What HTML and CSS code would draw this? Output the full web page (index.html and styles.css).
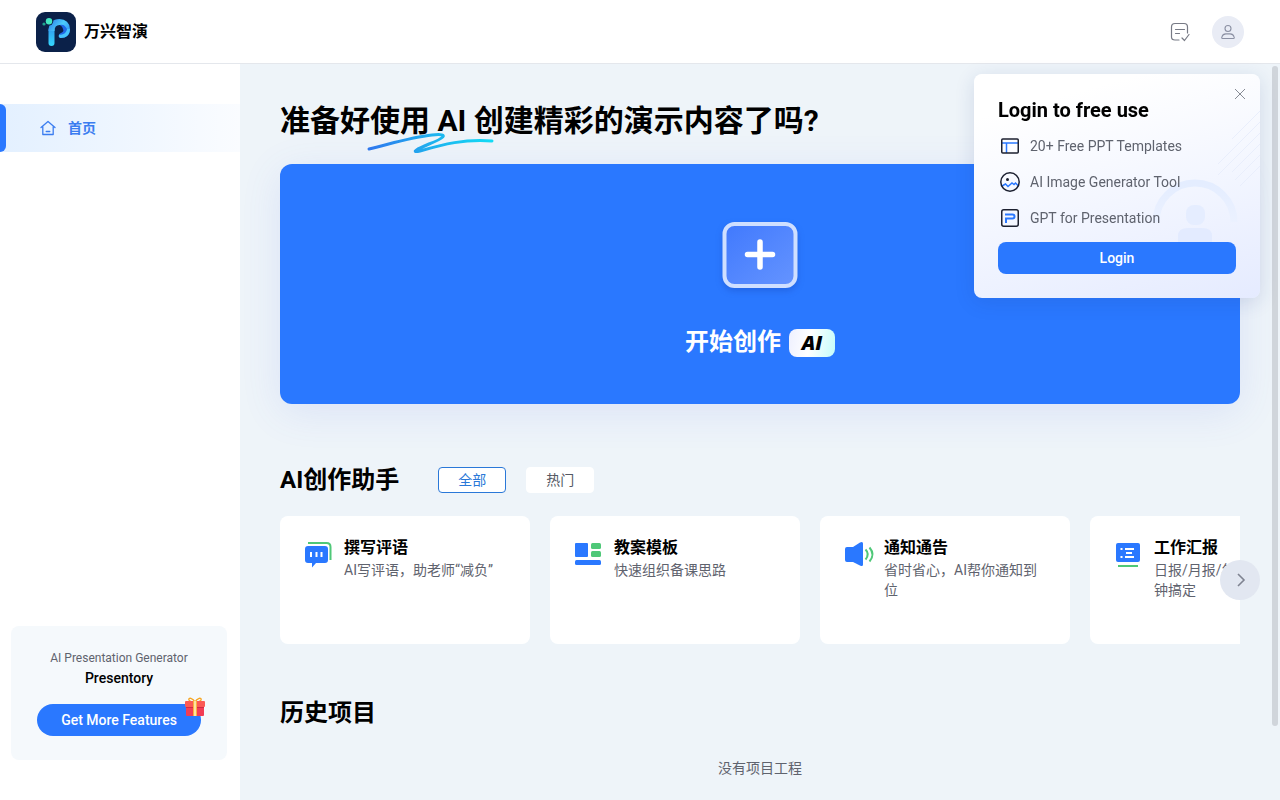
FILE: index.html
```html
<!DOCTYPE html>
<html lang="zh-CN">
<head>
    <meta charset="UTF-8">
    <meta name="viewport" content="width=device-width, initial-scale=1.0">
    <title>万兴智演</title>
    <link rel="stylesheet" href="styles.css">
</head>
<body>
<header class="header">
    <a class="brand" href="#">
        <svg class="logo" viewBox="0 0 40 40" fill="none">
            <defs>
                <linearGradient id="stem" x1="0" y1="10" x2="0" y2="34" gradientUnits="userSpaceOnUse">
                    <stop offset="0" stop-color="#2f86ea"/>
                    <stop offset="1" stop-color="#35d8fc"/>
                </linearGradient>
                <linearGradient id="bowl" x1="15" y1="8" x2="33" y2="22" gradientUnits="userSpaceOnUse">
                    <stop offset="0" stop-color="#2f86ea"/>
                    <stop offset=".5" stop-color="#4ccdfb"/>
                    <stop offset="1" stop-color="#2f8df2"/>
                </linearGradient>
            </defs>
            <rect width="40" height="40" rx="9" fill="#0b2149"/>
            <path d="M15.500 31V18" stroke="url(#stem)" stroke-width="6" stroke-linecap="round"/>
            <path d="M15.500 19c0-6 3-9 8-9 4.500 0 7.500 3 7.500 7" stroke="url(#bowl)" stroke-width="6"/>
            <path d="M24 13c4-1 5 1 7 4h3c0 6-4 9-9 9-3 0-3-4 0-5 2-1 3-2 2-4-.5-2-1.500-3-3-4z" fill="#1f68e6"/>
            <path d="M34 17c0 6-4 9-9 9-2 0-3-2-1.500-3.500 3 1 7-1.500 7.500-5.500z" fill="#46c4fb"/>
            <circle cx="13" cy="9.300" r="4.200" fill="#0b2149"/>
            <circle cx="13" cy="9.300" r="3.200" fill="#43e7c0"/>
            <circle cx="8" cy="12" r="1.600" fill="#1fa58f"/>
        </svg>
        <span>万兴智演</span>
    </a>
    <div class="tools">
        <button class="tool" aria-label="任务">
            <svg width="20" height="20" viewBox="0 0 20 20" fill="none" stroke="#777a85" stroke-width="1.200" stroke-linecap="round" stroke-linejoin="round">
                <path d="M9 18H5c-2 0-3.500-1-3.500-3V5c0-2 1.500-3.500 3.500-3.500h9c2 0 3.500 1.500 3.500 3.500v6M5.500 7.500h9M5.500 11.500h4M12 16l2.500 2.500L19 12.500"/>
            </svg>
        </button>
        <button class="tool avatar" aria-label="用户">
            <svg width="16" height="16" viewBox="0 0 16 16" fill="none" stroke="#8b90a3" stroke-width="1.100" stroke-linejoin="round">
                <circle cx="8" cy="4.500" r="3"/>
                <path d="M2.500 14.500c-1 0-.8-1-.6-1.600.6-2 2-3 4-3h4.200c2 0 3.400 1 4 3 .2.600.400 1.600-.6 1.600z"/>
            </svg>
        </button>
    </div>
</header>
<div class="container">
    <aside class="sidebar">
        <nav>
            <a class="nav-item active" href="#">
                <svg width="16" height="16" viewBox="0 0 16 16" fill="none" stroke="#3b7df0" stroke-width="1.300" stroke-linecap="round" stroke-linejoin="round">
                    <path d="M1 7.500L8 1.500l7 6M2.800 7v7.500h10.400V7M6.200 11.500h3.600"/>
                </svg>
                <span>首页</span>
            </a>
        </nav>
        <div class="promo">
            <p class="promo-text">AI Presentation Generator</p>
            <p class="promo-name">Presentory</p>
            <button class="promo-btn">Get More Features
                <svg class="gift" viewBox="0 0 20 20">
                    <path d="M10 5C8 1 3 0 4 3c1 2 4 2 6 2 2 0 5 0 6-2 1-3-4-2-6 2z" fill="none" stroke="#f6a623" stroke-width="1.500"/>
                    <rect x="1" y="9" width="18" height="10" rx="1" fill="#f23d55"/>
                    <rect y="4" width="20" height="6" rx="1" fill="#fb5a55"/>
                    <rect x="1" y="10" width="18" height="1" fill="#cf2a44"/>
                    <path d="M8 4h4v15H8z" fill="#fbb040"/>
                    <path d="M9 4h2v15H9z" fill="#fde3a0"/>
                </svg>
            </button>
        </div>
    </aside>
    <main class="main">
        <h1 class="title">准备好使用 AI 创建精彩的演示内容了吗?
            <svg class="scribble" viewBox="0 0 128 22" fill="none">
                <defs>
                    <linearGradient id="line" x1="0" y1="0" x2="1" y2="0">
                        <stop offset="0" stop-color="#2f78ee"/>
                        <stop offset=".5" stop-color="#1fb0ee"/>
                        <stop offset="1" stop-color="#12dbf5"/>
                    </linearGradient>
                </defs>
                <path d="M3 17C24 12 46 5 66 3c20-2 10 4-3 9-12 5-19 9-9 7 24-7 44-12 72-10" stroke="url(#line)" stroke-width="3" stroke-linecap="round" stroke-linejoin="round"/>
            </svg>
        </h1>
        <button class="create">
            <svg class="plus" viewBox="0 0 80 72">
                <defs>
                    <linearGradient id="plus-bg" x1="0" y1="0" x2="1" y2="1">
                        <stop offset="0" stop-color="#4079fd"/>
                        <stop offset="1" stop-color="#6594ff"/>
                    </linearGradient>
                </defs>
                <rect x="4.500" y="4" width="71" height="62" rx="10" fill="url(#plus-bg)" stroke="#cfdfff" stroke-width="4"/>
                <path d="M40 22v25M27.500 34.500h25" stroke="#fff" stroke-width="5.500" stroke-linecap="round"/>
            </svg>
            <span class="create-label">开始创作<b class="badge">AI</b></span>
        </button>

        <section>
            <div class="section-head">
                <h2>AI创作助手</h2>
                <div class="tabs">
                    <button class="tab on">全部</button>
                    <button class="tab">热门</button>
                </div>
            </div>
            <div class="slider">
                <div class="cards">
                    <a class="card" href="#">
                        <svg class="card-icon" viewBox="0 0 28 28">
                            <path d="M4 3h18.500q4 0 4 4v13" fill="none" stroke="#4fc878" stroke-width="2"/>
                            <path d="M4 6h17q3 0 3 3v11q0 3-3 3h-9l-4 4.500V23H4q-3 0-3-3V9q0-3 3-3z" fill="#2a78ff"/>
                            <path d="M7 12v5M12.500 12v5M17.500 12v5" stroke="#fff" stroke-width="2"/>
                        </svg>
                        <div>
                            <h3>撰写评语</h3>
                            <p>AI写评语，助老师“减负”</p>
                        </div>
                    </a>
                    <a class="card" href="#">
                        <svg class="card-icon" viewBox="0 0 28 28">
                            <rect x="1" y="3" width="13" height="14" rx="1" fill="#2a78ff"/>
                            <rect x="17" y="3" width="10" height="6" rx="1.500" fill="#4fc878"/>
                            <rect x="17" y="11" width="10" height="6" rx="1.500" fill="#4fc878"/>
                            <rect x="1" y="20" width="26" height="5" rx="1.500" fill="#2a78ff"/>
                        </svg>
                        <div>
                            <h3>教案模板</h3>
                            <p>快速组织备课思路</p>
                        </div>
                    </a>
                    <a class="card" href="#">
                        <svg class="card-icon" viewBox="0 0 28 28">
                            <path d="M3 7h6l7-4.600q3-1.400 3 1v21.200q0 2.400-3 1L9 22H3q-2 0-2-2V9q0-2 2-2z" fill="#2a78ff"/>
                            <path d="M21.500 9.500q4.500 4.500 0 10M25.500 7.500q6 7 0 14" fill="none" stroke="#4fc878" stroke-width="2"/>
                        </svg>
                        <div>
                            <h3>通知通告</h3>
                            <p>省时省心，AI帮你通知到位</p>
                        </div>
                    </a>
                    <a class="card" href="#">
                        <svg class="card-icon" viewBox="0 0 28 28">
                            <rect x="2" y="3" width="24" height="19" rx="2" fill="#2a78ff"/>
                            <path d="M11 9h9M12 13h6M11 17h9M6.500 9h2M6.500 17h2" stroke="#fff" stroke-width="2"/>
                            <path d="M4 26h20" stroke="#4fc878" stroke-width="2"/>
                        </svg>
                        <div>
                            <h3>工作汇报</h3>
                            <p>日报/月报/年终总结几分钟搞定</p>
                        </div>
                    </a>
                </div>
                <button class="next" aria-label="下一页">
                    <svg width="16" height="16" viewBox="0 0 16 16" fill="none" stroke="#7f8391" stroke-width="1.600"><path d="M6 2l6 6-6 6"/></svg>
                </button>
            </div>
        </section>

        <section class="history">
            <h2>历史项目</h2>
            <p class="empty">没有项目工程</p>
        </section>
    </main>
</div>

<div class="scrollbar"></div>

<div class="login">
    <svg class="login-bg" viewBox="0 0 286 224" fill="none">
        <defs>
            <linearGradient id="ring" x1="0" y1="0" x2="0" y2="1">
                <stop offset="0" stop-color="#e4edff"/>
                <stop offset="1" stop-color="#ebf1ff"/>
            </linearGradient>
        </defs>
        <path d="M286 37l-28 28M286 48l-42 42M286 59l-42 42M286 70l-28 28M286 81l-25 25M286 92l-20 20" stroke="#e9eefc"/>
        <path d="M182 148a39 39 0 0 1 78 0" stroke="url(#ring)" stroke-width="7"/>
        <rect x="212" y="131" width="19" height="20" rx="8" fill="#e5edff"/>
        <path d="M204 168v-6q0-8 10-8h14q10 0 10 8v6z" fill="#e3ebff"/>
    </svg>
    <button class="close" aria-label="关闭">
        <svg width="12" height="12" viewBox="0 0 12 12" stroke="#878b95" stroke-width="1"><path d="M1 1l10 10M11 1L1 11"/></svg>
    </button>
    <h2 class="login-title">Login to free use</h2>
    <ul class="features">
        <li>
            <svg width="24" height="24" viewBox="0 0 24 24" fill="none" stroke-width="1.500">
                <path d="M4 9h16M8.500 9v10" stroke="#2a78ff"/>
                <rect x="3.750" y="5" width="16.500" height="14" rx="1" stroke="#1c2030"/>
            </svg>
            20+ Free PPT Templates
        </li>
        <li>
            <svg width="24" height="24" viewBox="0 0 24 24" fill="none" stroke-width="1.500">
                <path d="M4 16l3.500-2 2.500 2.500 4-3.500 2 1.500 1.500-1.500 3 3" stroke="#2a78ff"/>
                <circle cx="12" cy="12" r="9.200" stroke="#1c2030"/>
                <circle cx="9.500" cy="9.500" r="1.500" fill="#1c2030"/>
            </svg>
            AI Image Generator Tool
        </li>
        <li>
            <svg width="24" height="24" viewBox="0 0 24 24" fill="none" stroke-width="1.500">
                <rect x="3.750" y="3.750" width="16.500" height="16.500" rx="2" stroke="#1c2030"/>
                <path d="M7 8.500h7.500q2 0 2 2t-2 2H8V17" stroke="#2a78ff" stroke-width="2"/>
            </svg>
            GPT for Presentation
        </li>
    </ul>
    <button class="login-btn">Login</button>
</div>
</body>
</html>
```

FILE: styles.css
```css
*{
    margin:0;
    padding:0;
    box-sizing: border-box;
}
body{
    height:100vh;
    display: flex;
    flex-direction: column;
    overflow: hidden;
    font-family: Roboto, "Noto Sans CJK SC", sans-serif;
    font-size:14px;
    line-height: 20px;
    color:#000;
    background-color: #eef4f9;
}
a{
    color:inherit;
    text-decoration: none;
}
button{
    border:none;
    font-family: inherit;
    font-size:14px;
    cursor: pointer;
}
svg{
    display: block;
    flex-shrink: 0;
}
.header{
    height:64px;
    flex-shrink: 0;
    padding:0 36px;
    display: flex;
    align-items: center;
    justify-content: space-between;
    background-color: #fff;
    border-bottom: 1px solid #e4e7ec;
}
.brand{
    display: flex;
    align-items: center;
    gap:8px;
    font-size:16px;
    font-weight: bold;
}
.logo{
    width:40px;
    height:40px;
}
.tools{
    display: flex;
    gap:16px;
}
.tool{
    width:32px;
    height:32px;
    display: flex;
    align-items: center;
    justify-content: center;
    background: none;
}
.avatar{
    border-radius: 50%;
    background-color: #e9ecf5;
}
.container{
    flex:1;
    min-height: 0;
    display: flex;
}
.sidebar{
    width:240px;
    flex-shrink: 0;
    padding:40px 0;
    display: flex;
    flex-direction: column;
    justify-content: space-between;
    background-color: #fff;
}
.nav-item{
    height:48px;
    padding-left:40px;
    display: flex;
    align-items: center;
    gap:12px;
    position: relative;
    font-weight: bold;
    color:#3b7df0;
}
.nav-item.active{
    background: linear-gradient(90deg,#e3f0ff,#fafcff);
}
.nav-item.active::before{
    content:"";
    position: absolute;
    left:0;
    top:0;
    width:6px;
    height:100%;
    border-radius: 0 6px 6px 0;
    background-color: #2a78ff;
}
.promo{
    margin:0 13px 0 11px;
    padding:22px 24px 24px;
    border-radius: 8px;
    text-align: center;
    background-color: #f5f9fc;
}
.promo-text{
    font-size:12px;
    color:#5f636e;
}
.promo-name{
    font-weight: 500;
}
.promo-btn{
    width:164px;
    height:32px;
    margin-top:16px;
    position: relative;
    border-radius: 16px;
    color:#fff;
    font-weight: 500;
    background-color: #2a78ff;
}
.gift{
    width:20px;
    height:20px;
    position: absolute;
    right:-4px;
    top:-7px;
}
.main{
    flex:1;
    min-width: 0;
    padding:37px 40px 0;
    overflow: hidden;
}
.title{
    width:fit-content;
    margin-bottom:23px;
    position: relative;
    font-size:30px;
    line-height: 40px;
    white-space: nowrap;
}
.scribble{
    width:128px;
    height:22px;
    position: absolute;
    left:86px;
    top:31px;
}
.create{
    width:100%;
    height:240px;
    padding-top:8px;
    display: flex;
    flex-direction: column;
    align-items: center;
    justify-content: center;
    gap:36px;
    border-radius: 12px;
    color:#fff;
    background-color: #2a78ff;
    box-shadow: 0 8px 40px rgba(80,110,230,.12);
}
.plus{
    width:80px;
    height:72px;
    filter: drop-shadow(0 3px 3px rgba(20,60,170,.3));
}
.create-label{
    display: flex;
    align-items: baseline;
    gap:8px;
    font-size:24px;
    line-height: 28px;
    font-weight: bold;
}
.badge{
    width:46px;
    height:28px;
    border-radius: 8px;
    font-family: "Open Sans", sans-serif;
    font-size:20px;
    line-height: 28px;
    font-style: italic;
    font-weight: 800;
    color:#000;
    background: linear-gradient(100deg,#eef0ff,#fff 45%,#c4fcfa);
}
h2{
    font-size:24px;
    line-height: 32px;
}
.section-head{
    margin:60px 0 20px;
    display: flex;
    align-items: center;
    gap:39px;
}
.tabs{
    display: flex;
    gap:20px;
}
.tab{
    width:68px;
    height:26px;
    padding-bottom:2px;
    border:1px solid #fff;
    border-radius: 4px;
    color:#555963;
    background-color: #fff;
}
.tab.on{
    border-color: #2a78d8;
    color:#2a78d8;
}
.slider{
    position: relative;
}
.cards{
    display: flex;
    gap:20px;
    overflow: hidden;
}
.card{
    width:250px;
    height:128px;
    flex-shrink: 0;
    padding:20px 24px;
    display: flex;
    gap:12px;
    border-radius: 8px;
    background-color: #fff;
}
.card-icon{
    width:28px;
    height:28px;
    margin-top:4px;
    overflow: visible;
}
.card h3{
    font-size:16px;
    line-height: 24px;
}
.card p{
    color:#5f636e;
}
.next{
    width:40px;
    height:40px;
    position: absolute;
    right:-20px;
    top:44px;
    display: flex;
    align-items: center;
    justify-content: center;
    border-radius: 50%;
    background-color: #e2e7f1;
}
.history{
    margin-top:53px;
}
.empty{
    margin-top:29px;
    text-align: center;
    color:#5f636e;
}
.scrollbar{
    width:6px;
    height:660px;
    position: fixed;
    right:2px;
    top:66px;
    border-radius: 3px;
    background-color: #d0d5db;
}
.login{
    width:286px;
    padding:24px;
    position: fixed;
    right:20px;
    top:74px;
    border-radius: 8px;
    background: linear-gradient(165deg,#fff 15%,#f3f6ff 55%,#e5ebff);
    box-shadow: 0 4px 20px rgba(30,60,130,.14);
}
.login-bg{
    width:100%;
    height:100%;
    position: absolute;
    left:0;
    top:0;
}
.close{
    position: absolute;
    right:14px;
    top:14px;
    background: none;
}
.login-title{
    position: relative;
    font-size:20px;
    line-height: 24px;
    font-weight: bold;
}
.features{
    margin:6px 0;
    position: relative;
    list-style: none;
    color:#5f636e;
}
.features li{
    height:36px;
    display: flex;
    align-items: center;
    gap:8px;
}
.login-btn{
    width:100%;
    height:32px;
    position: relative;
    display: block;
    border-radius: 8px;
    color:#fff;
    font-weight: 500;
    background-color: #2a78ff;
}
```
